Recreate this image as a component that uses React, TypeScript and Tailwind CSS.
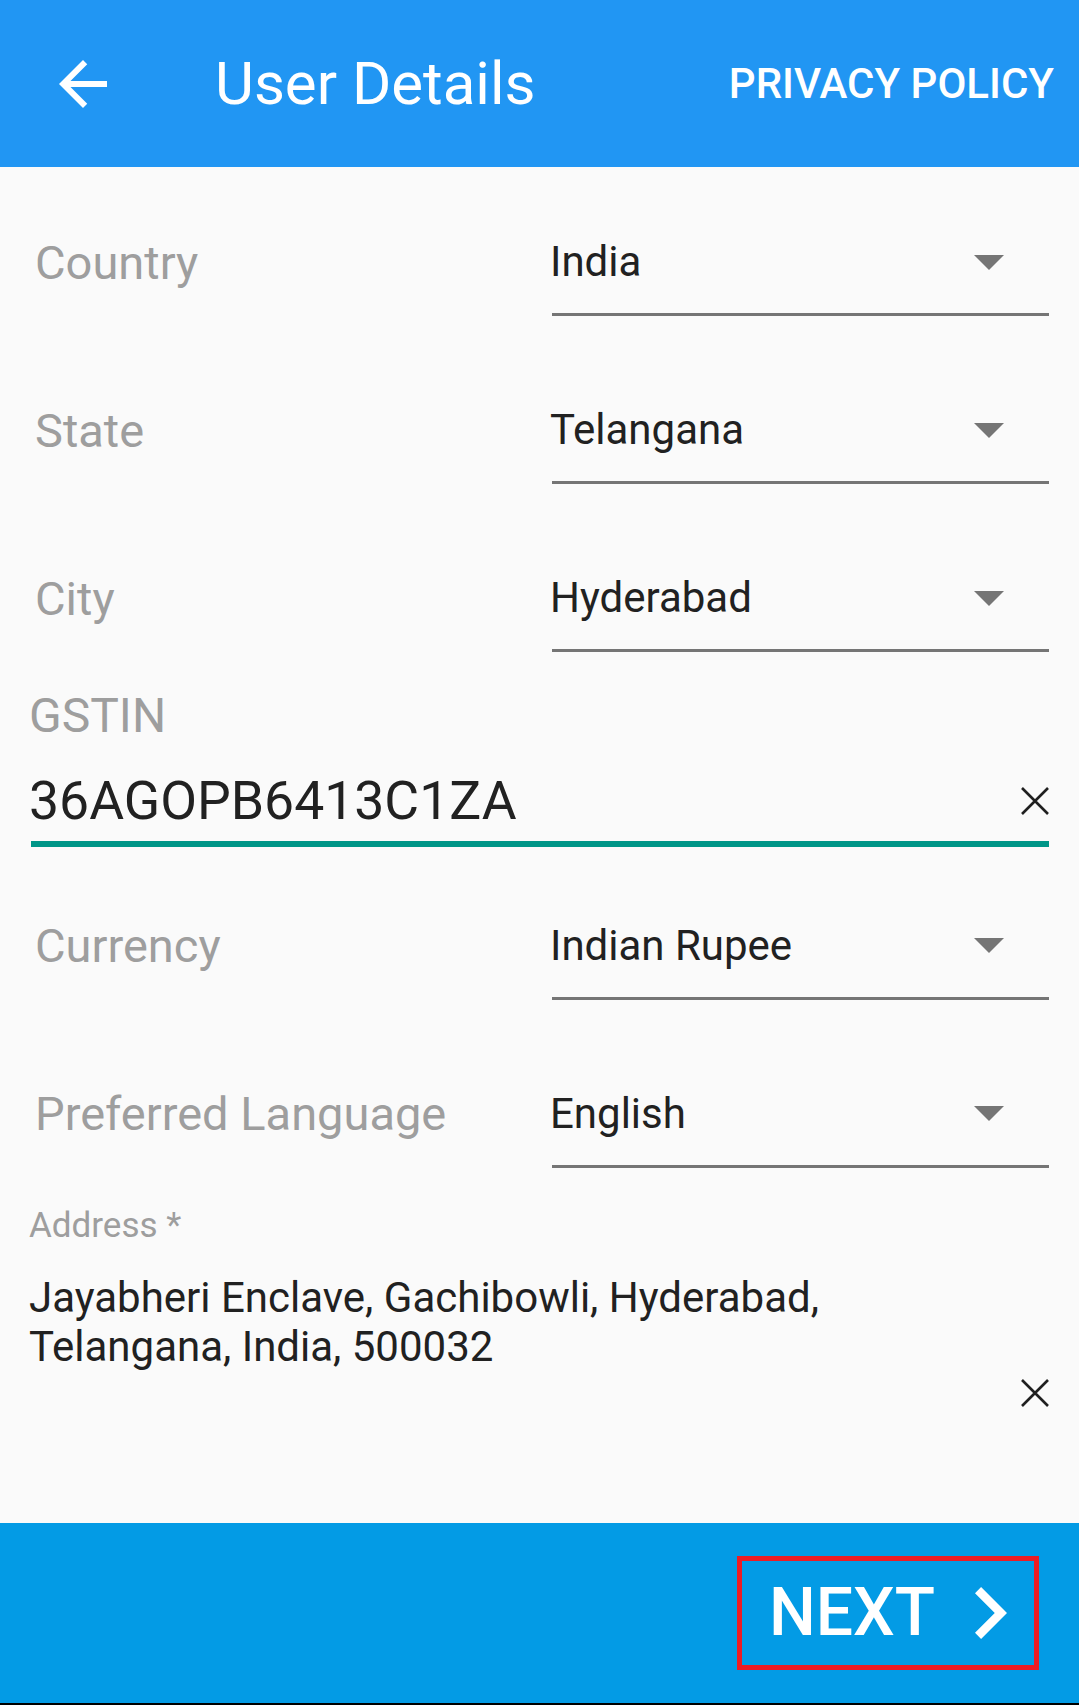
import React from "react";

const FONT = { fontFamily: "Roboto, 'Noto Sans', sans-serif" };

function Caret() {
  return (
    <svg width="30" height="15" viewBox="0 0 30 15" className="shrink-0">
      <path d="M0 0 L30 0 L15 15 Z" fill="#757575" />
    </svg>
  );
}

function ClearIcon() {
  return (
    <svg width="28" height="28" viewBox="0 0 28 28" className="shrink-0">
      <path d="M1 1 L27 27 M27 1 L1 27" stroke="#1f1f1f" strokeWidth="2.6" fill="none" />
    </svg>
  );
}

function SelectRow({ label, value, className = "" }: { label: string; value: string; className?: string }) {
  return (
    <div className={`flex items-start pl-[35px] pr-[30px] ${className}`}>
      <div className="w-[517px] h-[102px] flex items-center text-[47px] leading-none text-[#9E9E9E]">{label}</div>
      <div className="flex-1 h-[105px] flex items-center justify-between pr-[45px] border-b-[3px] border-[#757575]">
        <span className="-ml-[2px] text-[42px] leading-none text-[#212121]">{value}</span>
        <Caret />
      </div>
    </div>
  );
}

export default function App() {
  return (
    <div className="w-[1079px] h-[1705px] flex flex-col bg-[#FAFAFA]" style={FONT}>
      {/* toolbar */}
      <div className="h-[167px] shrink-0 bg-[#2196F3] flex items-center pl-[59px] pr-[25px] text-white">
        <svg width="48" height="48" viewBox="4 4 16 16" className="shrink-0">
          <path d="M20 11H7.83l5.59-5.59L12 4l-8 8 8 8 1.41-1.41L7.83 13H20v-2z" fill="#fff" />
        </svg>
        <h1 className="ml-[108px] text-[60px] leading-none font-normal">User Details</h1>
        <button className="ml-auto text-[42px] leading-none font-medium">PRIVACY POLICY</button>
      </div>

      {/* form */}
      <div className="flex-1 flex flex-col">
        <SelectRow label="Country" value="India" className="mt-[44px]" />
        <SelectRow label="State" value="Telangana" className="mt-[63px]" />
        <SelectRow label="City" value="Hyderabad" className="mt-[63px]" />

        <div className="mt-[40px] pl-[31px] pr-[30px]">
          <div className="-ml-[2px] text-[48px] leading-none text-[#9E9E9E]">GSTIN</div>
          <div className="mt-[34px] flex items-center justify-between pb-[13px] border-b-[6px] border-[#009688]">
            <span className="-ml-[2px] text-[53.5px] leading-none text-[#212121]">36AGOPB6413C1ZA</span>
            <ClearIcon />
          </div>
        </div>

        <SelectRow label="Currency" value="Indian Rupee" className="mt-[48px]" />
        <SelectRow label="Preferred Language" value="English" className="mt-[63px]" />

        <div className="mt-[40px] pl-[29px] pr-[30px] flex flex-col">
          <div className="text-[35px] leading-none text-[#9E9E9E]">Address *</div>
          <p className="mt-[30px] text-[42px] leading-[49px] text-[#212121]">
            Jayabheri Enclave, Gachibowli, Hyderabad,
            <br />
            Telangana, India, 500032
          </p>
          <div className="self-end mt-[8px]">
            <ClearIcon />
          </div>
        </div>
      </div>

      {/* bottom bar */}
      <div className="h-[182px] shrink-0 bg-[#039BE5] border-b-2 border-black flex items-center justify-end pr-[40px]">
        <button className="w-[302px] h-[114px] border-[5px] border-[#ED1C24] flex items-center pl-[27px] text-white">
          <span className="text-[66px] leading-none font-medium">NEXT</span>
          <svg width="32" height="52" viewBox="8.59 6 7.41 12" className="ml-[40px] shrink-0">
            <path d="M10 6L8.59 7.41 13.17 12l-4.58 4.59L10 18l6-6z" fill="#fff" />
          </svg>
        </button>
      </div>
    </div>
  );
}
